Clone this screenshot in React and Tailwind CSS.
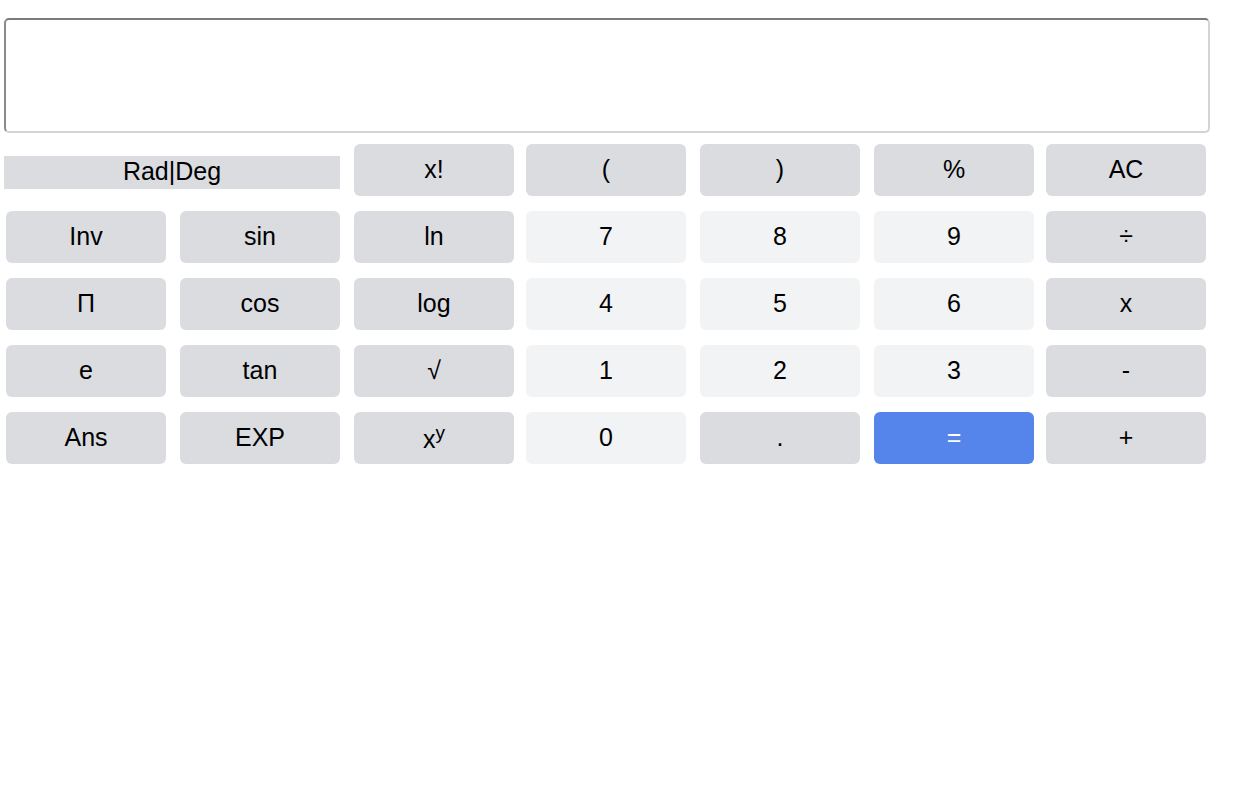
const OP = 'bg-[#dadce0]'
const NUM = 'bg-[#f1f3f4]'
const EQ = 'bg-[#5584ea] text-white'

const ROWS = [
  [null, null, { label: 'x!', c: OP }, { label: '(', c: OP }, { label: ')', c: OP }, { label: '%', c: OP }, { label: 'AC', c: OP }],
  [{ label: 'Inv', c: OP }, { label: 'sin', c: OP }, { label: 'ln', c: OP }, { label: '7', c: NUM }, { label: '8', c: NUM }, { label: '9', c: NUM }, { label: '÷', c: OP }],
  [{ label: 'Π', c: OP }, { label: 'cos', c: OP }, { label: 'log', c: OP }, { label: '4', c: NUM }, { label: '5', c: NUM }, { label: '6', c: NUM }, { label: 'x', c: OP }],
  [{ label: 'e', c: OP }, { label: 'tan', c: OP }, { label: '√', c: OP }, { label: '1', c: NUM }, { label: '2', c: NUM }, { label: '3', c: NUM }, { label: '-', c: OP }],
  [{ label: 'Ans', c: OP }, { label: 'EXP', c: OP }, { label: 'pow', c: OP }, { label: '0', c: NUM }, { label: '.', c: OP }, { label: '=', c: EQ }, { label: '+', c: OP }],
]

function Key({ k }) {
  return (
    <button className={`w-[160px] h-[52px] rounded-md flex items-center justify-center text-[25px] ${k.c}`}>
      {k.label === 'pow' ? (
        <span className="mt-[4px]">x<sup className="text-[19px]">y</sup></span>
      ) : (
        k.label
      )}
    </button>
  )
}

export default function App() {
  return (
    <div className="w-[1252px] h-[812px] bg-white pl-[4px] pt-[18px] text-black" style={{ fontFamily: '"Liberation Sans", Arial, sans-serif' }}>
      {/* Display */}
      <div className="w-[1206px] h-[115px] rounded-[5px] border-2 border-t-[#7b7b7b] border-l-[#8a8a8a] border-r-[#d4d4d4] border-b-[#d4d4d4] bg-white" />

      {/* Keypad */}
      <div className="mt-[11px] pl-[2px] grid grid-cols-[174px_174px_172px_174px_174px_172px_160px] grid-rows-[repeat(5,52px)] gap-y-[15px]">
        <div className="col-span-2 flex items-center">
          <div className="-ml-[2px] mt-[4px] w-[336px] h-[33px] bg-[#dadce0] flex items-center justify-center text-[25px]">
            Rad|Deg
          </div>
        </div>
        {ROWS.map((row, r) =>
          row.map((k, i) => (k ? <Key key={`${r}-${i}`} k={k} /> : null))
        )}
      </div>
    </div>
  )
}
